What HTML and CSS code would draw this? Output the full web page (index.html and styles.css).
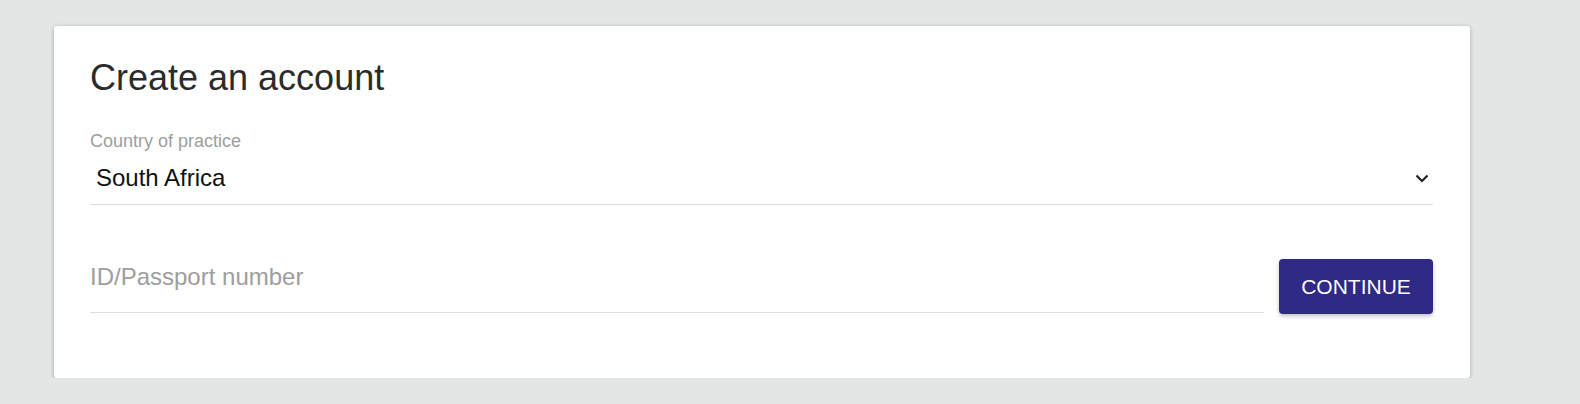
FILE: index.html
```html
<!DOCTYPE html>
<html lang="en">
<head>
  <meta charset="UTF-8">
  <title>Create an account</title>
  <link rel="stylesheet" href="styles.css">
</head>
<body>

  <div class="card">
    <h2>Create an account</h2>

    <label class="field-label">Country of practice</label>
    <div class="select">
      <span>South Africa</span>
      <svg class="chevron" width="14" height="9" viewBox="0 0 14 9">
        <polyline points="1.5,1.5 7,7 12.5,1.5" fill="none" stroke="#222" stroke-width="2.2"/>
      </svg>
    </div>

    <div class="id-row">
      <input class="id-input" type="text" placeholder="ID/Passport number">
      <button class="continue-button">CONTINUE</button>
    </div>
  </div>

</body>
</html>
```

FILE: styles.css
```css
body {
  margin: 0;
  padding: 26px 0 0 54px;
  font-family: "Liberation Sans", Arial, sans-serif;
  background-color: #e4e6e5;
}

.card {
  width: 1416px;
  box-sizing: border-box;
  height: 352px;
  padding: 31px 37px 0 36px;
  background-color: white;
  border-radius: 3px;
  box-shadow: 0 1px 4px rgba(0, 0, 0, 0.28);
}

h2 {
  margin: 0 0 32px;
  font-size: 36px;
  line-height: 42px;
  font-weight: normal;
  color: #2b2b2b;
}

.field-label {
  display: block;
  font-size: 18px;
  line-height: 21px;
  color: #9e9e9e;
}

.select {
  display: flex;
  justify-content: space-between;
  align-items: center;
  padding: 12px 4px 12px 6px;
  border-bottom: 1px solid #dedede;
  font-size: 24px;
  line-height: 28px;
  color: #111;
}

.chevron {
  display: block;
}

.id-row {
  display: flex;
  align-items: flex-end;
  gap: 15px;
  margin-top: 54px;
}

.id-input {
  flex: 1;
  margin: 0 0 1px;
  padding: 1px 0 21px;
  border: none;
  border-bottom: 1px solid #dedede;
  outline: none;
  font-family: inherit;
  font-size: 24px;
  line-height: 28px;
  height: 51px;
  box-sizing: border-box;
  color: #111;
}

.id-input::placeholder {
  color: #9e9e9e;
}

.continue-button {
  width: 154px;
  height: 55px;
  border: none;
  border-radius: 4px;
  background-color: #2e2a85;
  color: white;
  font-family: inherit;
  font-size: 21px;
  box-shadow: 0 2px 4px rgba(0, 0, 0, 0.25);
  cursor: pointer;
}
```
